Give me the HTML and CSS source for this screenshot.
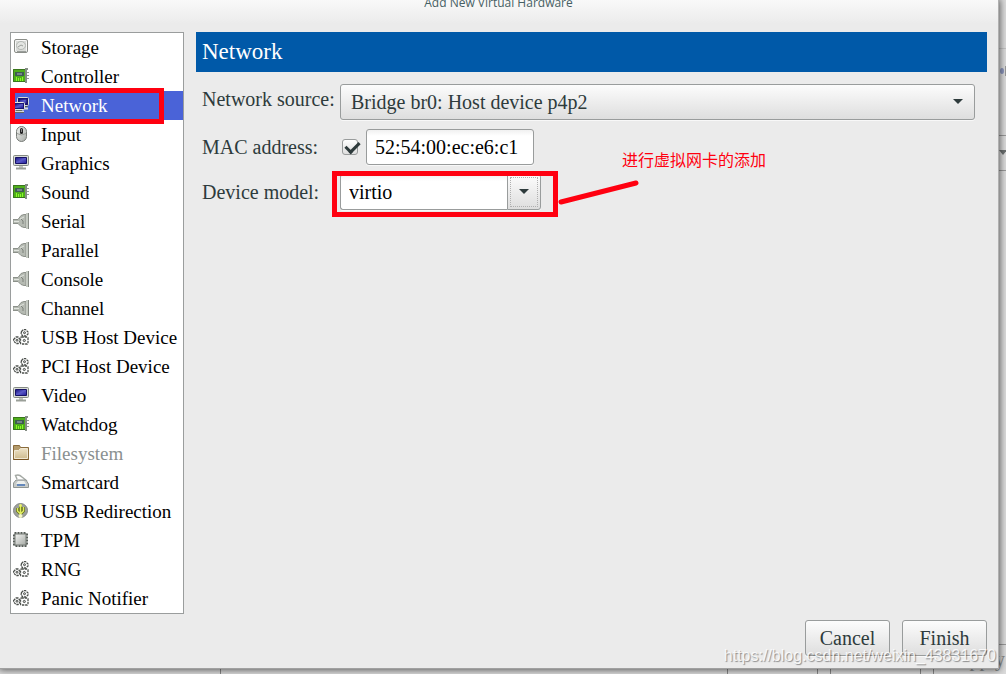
FILE: index.html
```html
<!DOCTYPE html>
<html lang="en">
<head>
<meta charset="utf-8">
<title>Add New Virtual Hardware</title>
<link rel="stylesheet" href="styles.css">
</head>
<body>
<svg class="symbols" aria-hidden="true">
  <defs>
    <linearGradient id="metal" x1="0" y1="0" x2="1" y2="1"><stop offset="0" stop-color="#f4f5f3"/><stop offset="1" stop-color="#a5a9a4"/></linearGradient>
    <linearGradient id="screen" x1="0" y1="0" x2="1" y2="1"><stop offset="0" stop-color="#15107c"/><stop offset=".5" stop-color="#5b5ac8"/><stop offset="1" stop-color="#211c98"/></linearGradient>
    <linearGradient id="paper" x1="0" y1="0" x2="0" y2="1"><stop offset="0" stop-color="#eee2c6"/><stop offset="1" stop-color="#cfbc91"/></linearGradient>
  </defs>
  <symbol id="disk" viewBox="0 0 16 16">
    <rect x="1.500" y=".5" width="13" height="13" rx="1.500" fill="#d9dbd8" stroke="#8b8e89"/>
    <rect x="2.500" y="1.500" width="11" height="11" rx="1" fill="none" stroke="#fff" opacity=".8"/>
    <ellipse cx="8" cy="6.500" rx="4.500" ry="4" fill="#e4e6e3" stroke="#b4b8b4"/>
    <path d="M5 8l3-2 2 1M4 12.500h9" fill="none" stroke="#9a9e9a"/>
  </symbol>
  <symbol id="card" viewBox="0 0 16 16">
    <path d="M0 1h13v13H0z" fill="#4fae1b"/>
    <path d="M.5 1.500h12v12H.5z" fill="none" stroke="#39751c"/>
    <path d="M2 4h9v4H2z" fill="#3d5c50"/><path d="M4 5h5v2H4z" fill="#75858a"/>
    <path d="M3.500 9v4M5.500 10v3M7.500 10v3M9.500 9v4" stroke="#8bfb27"/>
    <path d="M15 1h-2v14" fill="none" stroke="#858d85" stroke-width="2"/>
    <path d="M14 4.500h2M14 7.500h2M14 10.500h2" stroke="#919991"/>
  </symbol>
  <symbol id="net" viewBox="0 0 16 16">
    <path d="M9 11.500h6" stroke="#d6d9d3" stroke-width="2"/>
    <rect x="4.500" y=".5" width="11" height="8" rx="1" fill="#1b1673" stroke="#d8dad5"/>
    <path d="M6 2h8v5H6z" fill="url(#screen)" stroke="#161164"/>
    <path d="M11.500 9.500h3" stroke="#55584f"/>
    <rect x=".5" y="5.500" width="11" height="7" rx="1" fill="#1b1673" stroke="#e5e6e1"/>
    <path d="M2 7h8v4H2z" fill="url(#screen)"/>
    <path d="M1 14.500h10" stroke="#d6d9d3" stroke-width="2"/><path d="M3 13.500h6M1 15.500h10" stroke="#666a62"/>
  </symbol>
  <symbol id="mouse" viewBox="0 0 16 16">
    <rect x="3.500" y=".5" width="10" height="15" rx="5" fill="url(#metal)" stroke="#777b77"/>
    <path d="M4 7.500q4.500 3 9 0" fill="none" stroke="#9a9d99"/>
    <rect x="7" y="2" width="3" height="6" rx="1.500" fill="#222"/><path d="M8.500 3v3" stroke="#888"/>
  </symbol>
  <symbol id="monitor" viewBox="0 0 16 16">
    <rect x=".5" y=".5" width="15" height="10" rx="1" fill="#d8dcd5" stroke="#858a83"/>
    <path d="M2.500 2.500h11v6h-11z" fill="url(#screen)" stroke="#161164"/>
    <path d="M6 11h4v2H6z" fill="#c2c6be"/><path d="M3 13.500h10" stroke="#9a9f98" stroke-width="2"/>
  </symbol>
  <symbol id="plug" viewBox="0 0 16 16">
    <path d="M0 6.500h5l3-4 3-1h2v13h-2l-3-1-3-3H0z" fill="#b5bab2" stroke="#8c918a"/>
    <path d="M1 8.500h5M7 6l4-2" stroke="#e2e5df"/><path d="M8 6l2 2v3" fill="none" stroke="#7c817a"/>
    <path d="M13 0h2v16h-2z" fill="#c6cbc3"/><path d="M15.500 0v16" stroke="#868b84"/>
  </symbol>
  <symbol id="gears" viewBox="0 0 16 16">
    <g fill="#fff" stroke="#4c504c" stroke-width="1.300" stroke-dasharray="2.400 .8">
      <path d="M8.500 2.500l2-2h2l2.500 2.500v2l-2 2h-3l-2-2z"/>
      <path d="M.6 10.500l2.500-2.500h2l2 2.500v1.500l-2 2.500h-2l-2.500-2.500z"/>
      <rect x="7.500" y="8" width="7.500" height="7" rx="1"/>
    </g>
    <g fill="#ccc" stroke="#4c504c"><circle cx="11.500" cy="3.700" r="1"/><circle cx="4" cy="11.200" r="1"/><circle cx="11.300" cy="11.500" r="1.100"/></g>
  </symbol>
  <symbol id="folder" viewBox="0 0 16 16">
    <path d="M.5 14.500V.5h6l1 2h8v12z" fill="#b39a6b" stroke="#8a6b3b"/>
    <path d="M1.500 13.500v-8h4l2-2h7v10z" fill="url(#paper)" stroke="#f0e8d4"/>
    <path d="M.5 14.500h15" stroke="#795322"/>
  </symbol>
  <symbol id="reader" viewBox="0 0 16 16">
    <path d="M4 5L2.500 1.500Q6 0 9 3l5 4" fill="none" stroke="#a4a9a4" stroke-width="1.500"/>
    <path d="M3 6h10l2.500 4v3.500H.5V9z" fill="#c6cac8" stroke="#8f9593"/>
    <path d="M5 7h6l2 3H3z" fill="#eef0ed"/><path d="M4 11h8" stroke="#6488bb" stroke-width="2"/>
  </symbol>
  <symbol id="usb" viewBox="0 0 16 16">
    <circle cx="7.500" cy="7.500" r="7" fill="#9da09c" stroke="#858884"/>
    <path d="M7.500 14V2M4.500 5v3l3 3 3-3V4" fill="none" stroke="#626c1b" stroke-width="3"/>
    <path d="M7.500 13V2M4.500 5v3l3 3 3-3V4" fill="none" stroke="#e0ed60" stroke-width="1.500"/>
    <circle cx="7.500" cy="13" r="2" fill="#f4f7c5"/><circle cx="7.500" cy="2.500" r="1.500" fill="#e7f26b"/>
  </symbol>
  <symbol id="chip" viewBox="0 0 16 16">
    <rect x="1.500" y="1.500" width="12" height="12" fill="none" stroke="#555b56" stroke-width="3" stroke-dasharray="2 1"/>
    <rect x="2" y="2" width="11" height="11" fill="url(#metal)" stroke="#777c77"/>
  </symbol>
</svg>

<div class="backdrop" aria-hidden="true">
  <svg class="backdrop-side" width="7" height="180" viewBox="0 0 7 180">
    <path d="M0 48.500h7" stroke="#c4c4c4"/><path d="M0 135.500h7M0 170.500h7" stroke="#999"/>
    <ellipse cx="3" cy="71" rx="2" ry="3" fill="#8c96bd"/><path d="M6.500 66v10" stroke="#999"/>
    <path d="M0 150h8l-4 5z" fill="#6c7070"/>
  </svg>
  <svg class="backdrop-bottom" width="786" height="6" viewBox="0 0 786 6">
    <path d="M.5 0v6M507.500 0v6M597.500 0v6M610.500 0v6M700.500 0v6M713.500 0v6" stroke="#888"/>
  </svg>
  <span class="backdrop-apply">Apply</span>
</div>

<main class="dialog">
  <h1 class="title">Add New Virtual Hardware</h1>
  <div class="content">
    <ul class="devices">
      <li><button class="device" type="button"><svg class="icon"><use href="#disk"/></svg>Storage</button></li>
      <li><button class="device" type="button"><svg class="icon"><use href="#card"/></svg>Controller</button></li>
      <li class="marked"><button class="device selected" type="button" aria-current="true"><svg class="icon"><use href="#net"/></svg>Network</button></li>
      <li><button class="device" type="button"><svg class="icon"><use href="#mouse"/></svg>Input</button></li>
      <li><button class="device" type="button"><svg class="icon"><use href="#monitor"/></svg>Graphics</button></li>
      <li><button class="device" type="button"><svg class="icon"><use href="#card"/></svg>Sound</button></li>
      <li><button class="device" type="button"><svg class="icon"><use href="#plug"/></svg>Serial</button></li>
      <li><button class="device" type="button"><svg class="icon"><use href="#plug"/></svg>Parallel</button></li>
      <li><button class="device" type="button"><svg class="icon"><use href="#plug"/></svg>Console</button></li>
      <li><button class="device" type="button"><svg class="icon"><use href="#plug"/></svg>Channel</button></li>
      <li><button class="device" type="button"><svg class="icon"><use href="#gears"/></svg>USB Host Device</button></li>
      <li><button class="device" type="button"><svg class="icon"><use href="#gears"/></svg>PCI Host Device</button></li>
      <li><button class="device" type="button"><svg class="icon"><use href="#monitor"/></svg>Video</button></li>
      <li><button class="device" type="button"><svg class="icon"><use href="#card"/></svg>Watchdog</button></li>
      <li><button class="device" type="button" disabled><svg class="icon"><use href="#folder"/></svg>Filesystem</button></li>
      <li><button class="device" type="button"><svg class="icon"><use href="#reader"/></svg>Smartcard</button></li>
      <li><button class="device" type="button"><svg class="icon"><use href="#usb"/></svg>USB Redirection</button></li>
      <li><button class="device" type="button"><svg class="icon"><use href="#chip"/></svg>TPM</button></li>
      <li><button class="device" type="button"><svg class="icon"><use href="#gears"/></svg>RNG</button></li>
      <li><button class="device" type="button"><svg class="icon"><use href="#gears"/></svg>Panic Notifier</button></li>
    </ul>
    <section class="panel">
      <h2 class="heading">Network</h2>
      <form class="form">
        <label class="label-top" for="source">Network source:</label>
        <div class="select-wrap">
          <select class="control source" id="source"><option>Bridge br0: Host device p4p2</option></select>
          <svg class="arrow select-arrow" viewBox="0 0 10 6"><path d="M0 0h10L5 5z"/></svg>
        </div>
        <label for="mac">MAC address:</label>
        <div class="mac-row">
          <input class="check" type="checkbox" checked aria-label="Use this MAC address">
          <input class="control entry mac" id="mac" type="text" value="52:54:00:ec:e6:c1">
        </div>
        <label for="model">Device model:</label>
        <div class="combo">
          <input class="control entry model" id="model" type="text" value="virtio">
          <button class="control drop" type="button" aria-label="Show device models"><svg class="arrow" viewBox="0 0 10 6"><path d="M0 0h10L5 5z"/></svg></button>
          <div class="callout">
            <svg class="pointer" width="82" height="26" viewBox="0 0 82 26"><path d="M3 22L78 3"/></svg>
            <span class="note" lang="zh">进行虚拟网卡的添加</span>
          </div>
        </div>
      </form>
    </section>
  </div>
  <footer class="actions">
    <button class="control action" type="button">Cancel</button>
    <button class="control action" type="button">Finish</button>
  </footer>
</main>
<div class="watermark">https://blog.csdn.net/weixin_43831670</div>
</body>
</html>
```
FILE: styles.css
```css
* { box-sizing: border-box; }

body {
  margin: 0;
  min-height: 100vh;
  padding: 0 7px 5px 0;
  display: flex;
  position: relative;
  overflow: hidden;
  background: #dcdcdc;
  color: #2e3b3c;
  font: 20px/28px "Liberation Serif", serif;
}

button, input, select { font: inherit; color: inherit; }

.symbols { position: absolute; width: 0; height: 0; }

.backdrop-side { position: absolute; top: 0; right: 0; }
.backdrop-bottom { position: absolute; bottom: 0; right: 0; }
.backdrop-apply {
  position: absolute;
  right: 0;
  bottom: 0;
  width: 73px;
  height: 30px;
  padding-left: 22px;
  border-top: 1px solid #999;
  color: #8b8f8f;
}

.dialog {
  position: relative;
  flex: 1;
  display: flex;
  flex-direction: column;
  padding: 0 11px 12px 10px;
  background: linear-gradient(#f9f9f9, #ebebeb 24px);
  border-right: 1px solid #b0b0b0;
  border-bottom: 1px solid #a0a0a0;
  box-shadow: 0 0 7px 1px rgba(0, 0, 0, .6);
}

.title {
  height: 32px;
  margin: 0;
  font: 500 12px/6px "Open Sans", sans-serif;
  color: #466064;
  text-align: center;
}

.content { flex: 1; display: flex; align-items: flex-start; gap: 12px; }

.devices {
  width: 174px;
  margin: 0;
  padding: 0;
  list-style: none;
  border: 1px solid #9a9d9d;
  background: #fff;
}

.device {
  width: 100%;
  height: 29px;
  padding: 0 0 0 2px;
  display: flex;
  align-items: center;
  gap: 12px;
  border: 0;
  background: none;
  color: #000;
  font-size: 19px;
  text-align: left;
  white-space: nowrap;
}
.device:disabled { color: #8a9090; }
.device.selected { background: #4a63d8; color: #fff; }

.icon { width: 16px; height: 16px; flex: none; margin-bottom: 1px; }

.marked { position: relative; }
.marked::after {
  content: "";
  position: absolute;
  inset: -3px 19px -4px -1px;
  border: 5px solid #ff0010;
  pointer-events: none;
}

.panel { flex: 1; min-width: 0; }

.heading {
  margin: 0;
  padding: 0 6px;
  background: #0059a8;
  color: #fff;
  font-size: 23px;
  font-weight: 400;
  line-height: 40px;
}

.form {
  display: grid;
  grid-template-columns: 131px minmax(0, 1fr);
  gap: 9px 7px;
  padding: 12px 12px 0 6px;
}
.form label { white-space: nowrap; line-height: 36px; }
.form .label-top { line-height: 30px; }

.control {
  height: 36px;
  border: 1px solid #999c9c;
  border-radius: 3px;
  background: linear-gradient(#fcfcfc, #dedede);
  box-shadow: 0 1px #f8f8f8;
}

.entry {
  min-width: 0;
  padding: 0 8px;
  color: #000;
  background: linear-gradient(#f0f0f0, #fff 6px);
}

.select-wrap { display: grid; align-items: center; }
.select-wrap > * { grid-area: 1 / 1; }
.source { width: 100%; padding: 0 10px; appearance: none; }
.arrow { width: 10px; height: 6px; fill: #2e3b3c; display: block; }
.select-arrow { justify-self: end; margin-right: 12px; pointer-events: none; z-index: 1; }

.mac-row { display: flex; align-items: center; gap: 8px; }
.check {
  appearance: none;
  width: 16px;
  height: 16px;
  margin: 0 0 0 2px;
  border: 1px solid #999c9c;
  border-radius: 3px;
  background: linear-gradient(#fff, #dedede);
  position: relative;
}
.check:checked::after {
  content: "";
  position: absolute;
  left: 5px;
  top: -1px;
  width: 6px;
  height: 11px;
  border: solid #2e3b3c;
  border-width: 0 3px 3px 0;
  transform: rotate(45deg);
}
.mac { width: 168px; }

.combo { position: relative; display: flex; width: 201px; }
.model { flex: 1; border-radius: 3px 0 0 3px; border-right: 0; }
.drop {
  width: 34px;
  padding: 0;
  display: grid;
  place-items: center;
  border-radius: 0 3px 3px 0;
  outline: 1px dotted #b0b0b0;
  outline-offset: -4px;
}
.combo::after {
  content: "";
  position: absolute;
  inset: -3px -17px -7px -8px;
  border: 5px solid #ff0010;
  pointer-events: none;
}

.callout {
  position: absolute;
  left: 218px;
  top: -29px;
  display: grid;
  grid-template-columns: 64px auto;
  color: #ff0010;
}
.pointer {
  grid-area: 2 / 1 / 3 / 3;
  margin-top: 7px;
  fill: none;
  stroke: #ff0010;
  stroke-width: 5;
  stroke-linecap: round;
}
.note {
  grid-column: 2;
  font: 16px/28px "Noto Sans CJK SC", sans-serif;
  white-space: nowrap;
}

.actions { display: flex; justify-content: flex-end; gap: 12px; padding-top: 6px; }
.action { width: 85px; padding: 0; }

.watermark {
  position: absolute;
  right: 10px;
  bottom: 4px;
  color: rgba(255, 255, 255, .85);
  font: 16px/28px "Liberation Sans", sans-serif;
  text-shadow: 1px 1px 1px rgba(0, 0, 0, .4);
  pointer-events: none;
}
```
